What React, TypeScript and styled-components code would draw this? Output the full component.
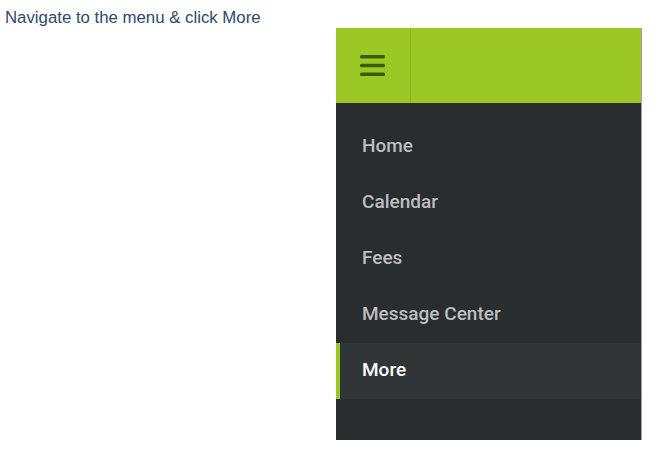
import styled, { createGlobalStyle } from "styled-components";

const GlobalStyle = createGlobalStyle`
  html, body {
    margin: 0;
    padding: 0;
    background: #ffffff;
  }
`;

const items = ["Home", "Calendar", "Fees", "Message Center", "More"];

const App = () => {
  return (
    <>
      <GlobalStyle />
      <Page>
        <Instruction>Navigate to the menu &amp; click More</Instruction>
        <Panel>
          <TopBar>
            <MenuButton>
              <svg width="25" height="21" viewBox="0 0 25 21">
                <rect x="0" y="0" width="25" height="3.4" rx="1.5" fill="#3d5a08" />
                <rect x="0" y="8.8" width="25" height="3.4" rx="1.5" fill="#3d5a08" />
                <rect x="0" y="17.6" width="25" height="3.4" rx="1.5" fill="#3d5a08" />
              </svg>
            </MenuButton>
          </TopBar>
          <NavList>
            {items.map((label) => (
              <NavItem key={label} $active={label === "More"}>
                {label}
              </NavItem>
            ))}
          </NavList>
        </Panel>
      </Page>
    </>
  );
};

export default App;

const Page = styled.div`
  width: 667px;
  height: 450px;
  display: flex;
  flex-direction: column;
`;

const Instruction = styled.div`
  font-family: "Liberation Sans", Arial, sans-serif;
  font-size: 16.8px;
  color: #2e4a6a;
  padding: 8px 0 0 5px;
  height: 20px;
  line-height: 19px;
`;

const Panel = styled.div`
  margin-left: 336px;
  width: 305px;
  height: 412px;
  background: #2a2d30;
  border-right: 1px solid #9ea0a2;
  display: flex;
  flex-direction: column;
`;

const TopBar = styled.div`
  height: 75px;
  background: #9bc824;
  display: flex;
`;

const MenuButton = styled.div`
  width: 75px;
  border-right: 1px solid #8bb51d;
  display: flex;
  align-items: center;
  justify-content: center;
  padding-right: 2px;
  box-sizing: border-box;
`;

const NavList = styled.div`
  padding-top: 16px;
  display: flex;
  flex-direction: column;
`;

const NavItem = styled.div<{ $active?: boolean }>`
  height: 56px;
  box-sizing: border-box;
  padding-bottom: 3px;
  display: flex;
  align-items: center;
  padding-left: ${(p) => (p.$active ? "22px" : "26px")};
  border-left: ${(p) => (p.$active ? "4px solid #9bc824" : "none")};
  background: ${(p) => (p.$active ? "#323538" : "transparent")};
  color: ${(p) => (p.$active ? "#ffffff" : "#bdbebf")};
  font-family: Roboto, "Noto Sans", sans-serif;
  font-size: 19px;
  font-weight: 500;
`;
